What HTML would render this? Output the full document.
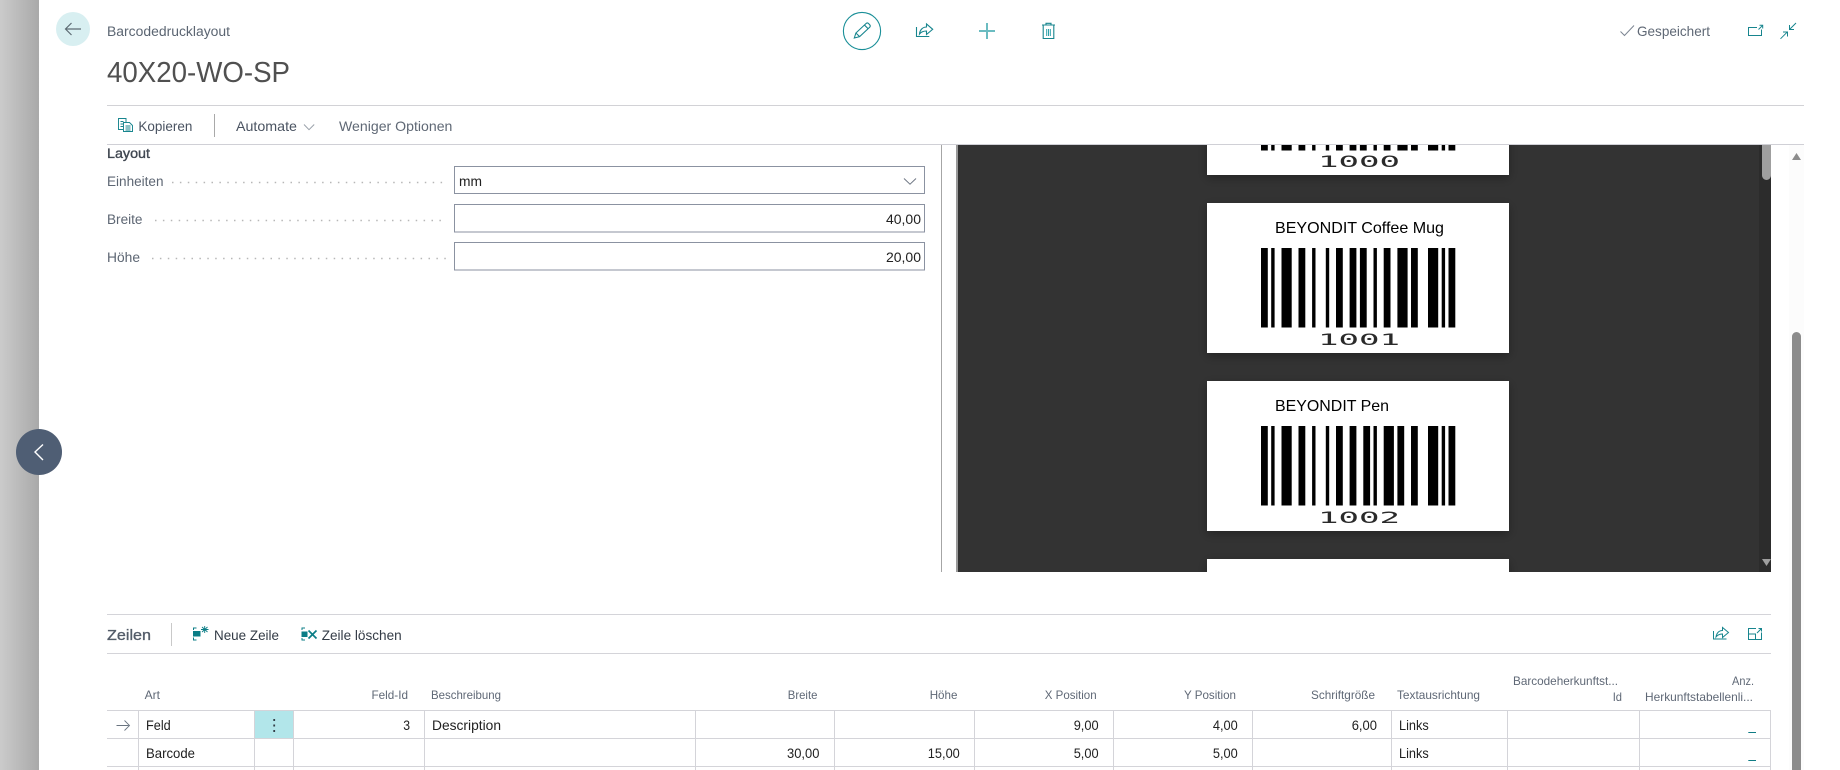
<!DOCTYPE html>
<html lang="de">
<head>
<meta charset="utf-8">
<title>Barcodedrucklayout</title>
<style>
html,body{margin:0;padding:0;background:#fff;width:1840px;height:770px;overflow:hidden}
svg{display:block}
text{font-family:"Liberation Sans",Arial,sans-serif;white-space:pre}
.b{font-size:13.5px;fill:#5b6572}
.c{font-size:14px;fill:#4a5361}
.h{font-size:12px;fill:#5f6876}
.r{font-size:14px;fill:#212121}
.l{font-size:13.5px;fill:#5d6673}
.n{font-family:"DejaVu Sans Mono",monospace;font-size:16px;fill:#2a2a2a;font-weight:400}
.t{font-size:16px;fill:#000}
</style>
</head>
<body>
<svg width="1840" height="770" viewBox="0 0 1840 770" xmlns="http://www.w3.org/2000/svg">
<defs>
<linearGradient id="g" x1="0" x2="1" y1="0" y2="0"><stop offset="0" stop-color="#cbcbcb"/><stop offset="1" stop-color="#a9a9a9"/></linearGradient>
<clipPath id="pc"><rect x="958" y="145" width="813" height="427"/></clipPath>
<filter id="sh" x="-10%" y="-20%" width="120%" height="140%"><feDropShadow dx="0" dy="3" stdDeviation="5" flood-color="#000" flood-opacity=".3"/></filter>
<filter id="bl"><feGaussianBlur stdDeviation=".35"/></filter>
<g id="bc1" fill="#000"><path d="M1261 0h6.8v79.5h-6.8zM1271.2 0h3.4v79.5h-3.4zM1281.5 0h10.2v79.5h-10.2zM1298.5 0h6.8v79.5h-6.8zM1312.1 0h3.4v79.5h-3.4zM1325.8 0h3.4v79.5h-3.4zM1336 0h6.8v79.5h-6.8zM1349.6 0h6.8v79.5h-6.8zM1359.9 0h6.8v79.5h-6.8zM1373.5 0h3.4v79.5h-3.4zM1383.7 0h6.8v79.5h-6.8zM1397.4 0h10.2v79.5h-10.2zM1411 0h6.8v79.5h-6.8zM1428 0h10.2v79.5h-10.2zM1441.7 0h3.4v79.5h-3.4zM1448.5 0h6.8v79.5h-6.8z"/></g>
<g id="bc2" fill="#000"><path d="M1261 0h6.8v79.5h-6.8zM1271.2 0h3.4v79.5h-3.4zM1281.5 0h10.2v79.5h-10.2zM1298.5 0h6.8v79.5h-6.8zM1312.1 0h3.4v79.5h-3.4zM1325.8 0h3.4v79.5h-3.4zM1336 0h6.8v79.5h-6.8zM1349.6 0h6.8v79.5h-6.8zM1363.3 0h6.8v79.5h-6.8zM1373.5 0h3.4v79.5h-3.4zM1383.7 0h10.2v79.5h-10.2zM1397.4 0h6.8v79.5h-6.8zM1411 0h6.8v79.5h-6.8zM1428 0h10.2v79.5h-10.2zM1441.7 0h3.4v79.5h-3.4zM1448.5 0h6.8v79.5h-6.8z"/></g>
</defs>

<rect width="1840" height="770" fill="#fff"/>
<rect width="39" height="770" fill="url(#g)"/>

<!-- back -->
<circle cx="73" cy="29" r="17" fill="#d8eff1"/>
<path d="M81 29H65.5M71.5 23l-6 6 6 6" fill="none" stroke="#5d6b73" stroke-width="1.2"/>
<text class="b" x="107" y="36" textLength="123" lengthAdjust="spacingAndGlyphs">Barcodedrucklayout</text>
<text x="107" y="82" font-size="29" fill="#505050" textLength="183" lengthAdjust="spacingAndGlyphs">40X20-WO-SP</text>

<!-- center actions -->
<circle cx="862" cy="31" r="18.6" fill="none" stroke="#1a8f98" stroke-width="1.1"/>
<path d="M854.3 38l1.6-5 10.3-9.6q1.1-.9 2.2 0l1.4 1.5q.9 1.1 0 2.2L859.6 36.6zM855.9 33l3.7 3.6M864.6 25.2l3.8 3.8" fill="none" stroke="#17858e" stroke-width="1.1"/>
<path d="M916.5 27v9.5H929.3" fill="none" stroke="#17858e" stroke-width="1.1"/>
<path d="M919.5 34c.5-4.5 3.5-7 7-7v-3l6.2 5.3-6.2 5.2v-3.5c-3 0-5.5 1-7 3z" fill="none" stroke="#17858e" stroke-width="1.1"/>
<path d="M979 31h16M987 23v16" fill="none" stroke="#6bbcc1" stroke-width="2"/>
<path d="M1042 25h13M1046 25v-1.7h5V25M1043.2 25v13.5h10.6V25" fill="none" stroke="#17858e" stroke-width="1.1"/>
<path d="M1046.7 29v7M1048.5 29v7M1050.3 29v7" fill="none" stroke="#2aa0a8" stroke-width="1"/>

<!-- top right -->
<path d="M1620.5 31.5l4 4 9.5-10" fill="none" stroke="#7c8592" stroke-width="1"/>
<text class="c" x="1637" y="36" textLength="73" lengthAdjust="spacingAndGlyphs" style="fill:#5f6875">Gespeichert</text>
<path d="M1757 27.5h-8.5v8h13v-6M1758.5 29.5l4.2-4.2M1759.5 25.3h3.2v3.2" fill="none" stroke="#17858e" stroke-width="1"/>
<path d="M1780.5 38.8l6.5-6.5M1783 32h4.5v4.5M1796 23l-6.5 6.5M1789.5 25v4.5h4.5" fill="none" stroke="#17858e" stroke-width="1"/>

<!-- header lines -->
<rect x="107" y="105" width="1697" height="1" fill="#d2d2d6"/>

<!-- action bar -->
<path d="M126 122v-3.5h-7.5v11h4.5M123.5 122.5h6l3 3v6h-9zM120.5 121.5h3M120.5 124h2.5M120.5 126.5h2.5M125.5 126h5M125.5 128h5M125.5 130h5" fill="none" stroke="#17858e" stroke-width=".95"/>
<text class="c" x="138.4" y="131" textLength="54" lengthAdjust="spacingAndGlyphs">Kopieren</text>
<rect x="214" y="114" width="1" height="23" fill="#a9a9a9"/>
<text class="c" x="236" y="131" textLength="61" lengthAdjust="spacingAndGlyphs">Automate</text>
<path d="M304 124.5l5 5.2 5.2-5.2" fill="none" stroke="#9aa1aa" stroke-width="1"/>
<text class="c" x="339" y="131" textLength="113.4" lengthAdjust="spacingAndGlyphs" style="fill:#5f6875">Weniger Optionen</text>
<rect x="107" y="144" width="1697" height="1" fill="#d0d0d6"/>

<!-- form -->
<text x="107" y="158" font-size="13.5" fill="#3f4650" stroke="#3f4650" stroke-width=".35" textLength="43" lengthAdjust="spacingAndGlyphs">Layout</text>
<text class="l" x="107" y="186" textLength="56.5" lengthAdjust="spacingAndGlyphs">Einheiten</text>
<text class="l" x="107" y="224" textLength="35.5" lengthAdjust="spacingAndGlyphs">Breite</text>
<text class="l" x="107" y="262" textLength="33" lengthAdjust="spacingAndGlyphs">Höhe</text>
<path d="M172 182.500H446M155 220.500H446M152 258.500H446" stroke="#b7b7b7" stroke-width="1.500" stroke-dasharray="1.500 6.400" fill="none"/>
<rect x="454.500" y="166.500" width="470" height="27" fill="#fff" stroke="#8b92a1"/>
<rect x="454.500" y="204.500" width="470" height="27.500" fill="#fff" stroke="#8b92a1"/>
<rect x="454.500" y="242.500" width="470" height="27.500" fill="#fff" stroke="#8b92a1"/>
<text class="r" x="459" y="186" textLength="23" lengthAdjust="spacingAndGlyphs">mm</text>
<path d="M904 178.500l6 5.700 6-5.700" fill="none" stroke="#6f7784" stroke-width="1"/>
<text class="r" x="886" y="224" textLength="35" lengthAdjust="spacingAndGlyphs">40,00</text>
<text class="r" x="886" y="262" textLength="35" lengthAdjust="spacingAndGlyphs">20,00</text>

<!-- preview panel -->
<rect x="941" y="145" width="1" height="427" fill="#a6a6a6"/>
<rect x="956" y="145" width="2" height="427" fill="#999"/>
<rect x="958" y="145" width="813" height="427" fill="#333"/>
<g clip-path="url(#pc)">
  <rect x="1207" y="100" width="302" height="75" fill="#fff" filter="url(#sh)"/>
  <rect x="1207" y="203" width="302" height="150" fill="#fff" filter="url(#sh)"/>
  <rect x="1207" y="381" width="302" height="150" fill="#fff" filter="url(#sh)"/>
  <rect x="1207" y="559" width="302" height="60" fill="#fff" filter="url(#sh)"/>

  <g transform="translate(0,71)"><use href="#bc1"/></g>
  <text class="n" x="1318" y="167" textLength="82" lengthAdjust="spacingAndGlyphs" filter="url(#bl)">1000</text>

  <text class="t" x="1275" y="233" textLength="169" lengthAdjust="spacingAndGlyphs">BEYONDIT Coffee Mug</text>
  <g transform="translate(0,248)"><use href="#bc1"/></g>
  <text class="n" x="1318" y="345" textLength="82" lengthAdjust="spacingAndGlyphs" filter="url(#bl)">1001</text>

  <text class="t" x="1275" y="411" textLength="114" lengthAdjust="spacingAndGlyphs">BEYONDIT Pen</text>
  <g transform="translate(0,426)"><use href="#bc2"/></g>
  <text class="n" x="1318" y="523" textLength="82" lengthAdjust="spacingAndGlyphs" filter="url(#bl)">1002</text>
</g>
<rect x="1759" y="145" width="12" height="427" fill="#2c2c2c"/>
<path d="M1762 145h9v30.500a4.500 4.500 0 0 1-9 0z" fill="#9f9f9f"/>
<path d="M1762 559h9l-4.500 7z" fill="#9f9f9f"/>

<!-- outer scrollbar -->
<rect x="1789" y="145" width="15" height="625" fill="#fcfcfc"/>
<path d="M1792 160h9l-4.500-7z" fill="#8c8c8c"/>
<path d="M1792 770V336.500a4.500 4.500 0 0 1 9 0V770z" fill="#8c8c8c"/>

<!-- nav button -->
<circle cx="39" cy="452" r="23" fill="#4f5e74"/>
<path d="M43 444.500L35 452l8 8" fill="none" stroke="#fff" stroke-width="1.400"/>

<!-- Zeilen -->
<rect x="107" y="614" width="1664" height="1" fill="#d4d4d9"/>
<rect x="107" y="653" width="1664" height="1" fill="#d4d4d9"/>
<text x="107" y="640" font-size="15" fill="#535c69" stroke="#535c69" stroke-width=".35" textLength="44" lengthAdjust="spacingAndGlyphs">Zeilen</text>
<rect x="171" y="623" width="1" height="23" fill="#c9c9c9"/>
<path d="M193 631h7.500v5.500H193z" fill="#0b7d86"/>
<path d="M193.500 630v-2h3M193.500 637.500v2.500h3" fill="none" stroke="#0b7d86" stroke-width="1"/>
<path d="M201 629.500h7.500M204.700 626v7M202 627l5.500 5M207.500 627l-5.500 5" fill="none" stroke="#0b7d86" stroke-width=".9"/>
<text class="c" x="214" y="640" textLength="65" lengthAdjust="spacingAndGlyphs" style="fill:#333b46">Neue Zeile</text>
<path d="M301.500 631.500h6v5.500h-6z" fill="#0b7d86"/>
<path d="M302 630v-2h3M302 638v2h3" fill="none" stroke="#0b7d86" stroke-width="1"/>
<path d="M308.500 630.500l8 8M316.500 630.500l-8 8" fill="none" stroke="#0b7d86" stroke-width="1.700"/>
<text class="c" x="321.700" y="640" textLength="80" lengthAdjust="spacingAndGlyphs" style="fill:#333b46">Zeile löschen</text>
<path d="M1713.500 631v8h13" fill="none" stroke="#17858e" stroke-width="1"/>
<path d="M1716 637c.5-4 3-6.500 6.500-6.500v-3l6 5-6 5v-3.500c-2.500 0-5 1-6.500 3z" fill="none" stroke="#17858e" stroke-width="1"/>
<path d="M1756 628.500h-7.500v11h13v-7M1748.500 634h7v5.500M1757 633l4.500-4.500M1758.500 628.500h3v3" fill="none" stroke="#17858e" stroke-width="1"/>

<!-- table header -->
<text class="h" x="144.600" y="699" textLength="15.400" lengthAdjust="spacingAndGlyphs">Art</text>
<text class="h" x="371.500" y="699" textLength="36.500" lengthAdjust="spacingAndGlyphs">Feld-Id</text>
<text class="h" x="431" y="699" textLength="70" lengthAdjust="spacingAndGlyphs">Beschreibung</text>
<text class="h" x="787.800" y="699" textLength="29.600" lengthAdjust="spacingAndGlyphs">Breite</text>
<text class="h" x="929.700" y="699" textLength="27.700" lengthAdjust="spacingAndGlyphs">Höhe</text>
<text class="h" x="1044.800" y="699" textLength="51.800" lengthAdjust="spacingAndGlyphs">X Position</text>
<text class="h" x="1184" y="699" textLength="52" lengthAdjust="spacingAndGlyphs">Y Position</text>
<text class="h" x="1311" y="699" textLength="64" lengthAdjust="spacingAndGlyphs">Schriftgröße</text>
<text class="h" x="1397" y="699" textLength="83" lengthAdjust="spacingAndGlyphs">Textausrichtung</text>
<text class="h" x="1513" y="685" textLength="105" lengthAdjust="spacingAndGlyphs">Barcodeherkunftst...</text>
<text class="h" x="1612.700" y="701" textLength="9.300" lengthAdjust="spacingAndGlyphs">Id</text>
<text class="h" x="1732" y="685" textLength="22" lengthAdjust="spacingAndGlyphs">Anz.</text>
<text class="h" x="1645" y="701" textLength="108" lengthAdjust="spacingAndGlyphs">Herkunftstabellenli...</text>

<!-- table grid -->
<rect x="255" y="710" width="39" height="28" fill="#b2e6ea"/>
<g fill="#d4d4d9">
  <rect x="107" y="710" width="1664" height="1"/>
  <rect x="107" y="738" width="1664" height="1"/>
  <rect x="107" y="766" width="1664" height="1"/>
  <rect x="138" y="710" width="1" height="60"/>
  <rect x="254" y="710" width="1" height="60"/>
  <rect x="293" y="710" width="1" height="60"/>
  <rect x="424" y="710" width="1" height="60"/>
  <rect x="695" y="710" width="1" height="60"/>
  <rect x="834" y="710" width="1" height="60"/>
  <rect x="974" y="710" width="1" height="60"/>
  <rect x="1113" y="710" width="1" height="60"/>
  <rect x="1252" y="710" width="1" height="60"/>
  <rect x="1391" y="710" width="1" height="60"/>
  <rect x="1507" y="710" width="1" height="60"/>
  <rect x="1639" y="710" width="1" height="60"/>
  <rect x="1770" y="710" width="1" height="60"/>
</g>
<path d="M116.500 725.500h12M124.500 720.500l5 5-5 5" fill="none" stroke="#6a7480" stroke-width=".9"/>
<g fill="#333d47"><rect x="273.300" y="719" width="1.800" height="2"/><rect x="273.300" y="724.500" width="1.800" height="2"/><rect x="273.300" y="730" width="1.800" height="2"/></g>

<!-- row 1 -->
<text class="r" x="146" y="730" textLength="24.700" lengthAdjust="spacingAndGlyphs">Feld</text>
<text class="r" x="403.200" y="730" textLength="6.800" lengthAdjust="spacingAndGlyphs">3</text>
<text class="r" x="432" y="730" textLength="69" lengthAdjust="spacingAndGlyphs">Description</text>
<text class="r" x="1073.700" y="730" textLength="24.900" lengthAdjust="spacingAndGlyphs">9,00</text>
<text class="r" x="1212.900" y="730" textLength="24.900" lengthAdjust="spacingAndGlyphs">4,00</text>
<text class="r" x="1351.700" y="730" textLength="25.300" lengthAdjust="spacingAndGlyphs">6,00</text>
<text class="r" x="1399" y="730" textLength="29.700" lengthAdjust="spacingAndGlyphs">Links</text>
<rect x="1748.300" y="732" width="7.700" height="1" fill="#0f7c85"/>

<!-- row 2 -->
<text class="r" x="146" y="758" textLength="49" lengthAdjust="spacingAndGlyphs">Barcode</text>
<text class="r" x="787" y="758" textLength="32.400" lengthAdjust="spacingAndGlyphs">30,00</text>
<text class="r" x="927.800" y="758" textLength="32" lengthAdjust="spacingAndGlyphs">15,00</text>
<text class="r" x="1073.700" y="758" textLength="24.900" lengthAdjust="spacingAndGlyphs">5,00</text>
<text class="r" x="1212.900" y="758" textLength="24.900" lengthAdjust="spacingAndGlyphs">5,00</text>
<text class="r" x="1399" y="758" textLength="29.700" lengthAdjust="spacingAndGlyphs">Links</text>
<rect x="1748.300" y="760" width="7.700" height="1" fill="#0f7c85"/>
</svg>
</body>
</html>
